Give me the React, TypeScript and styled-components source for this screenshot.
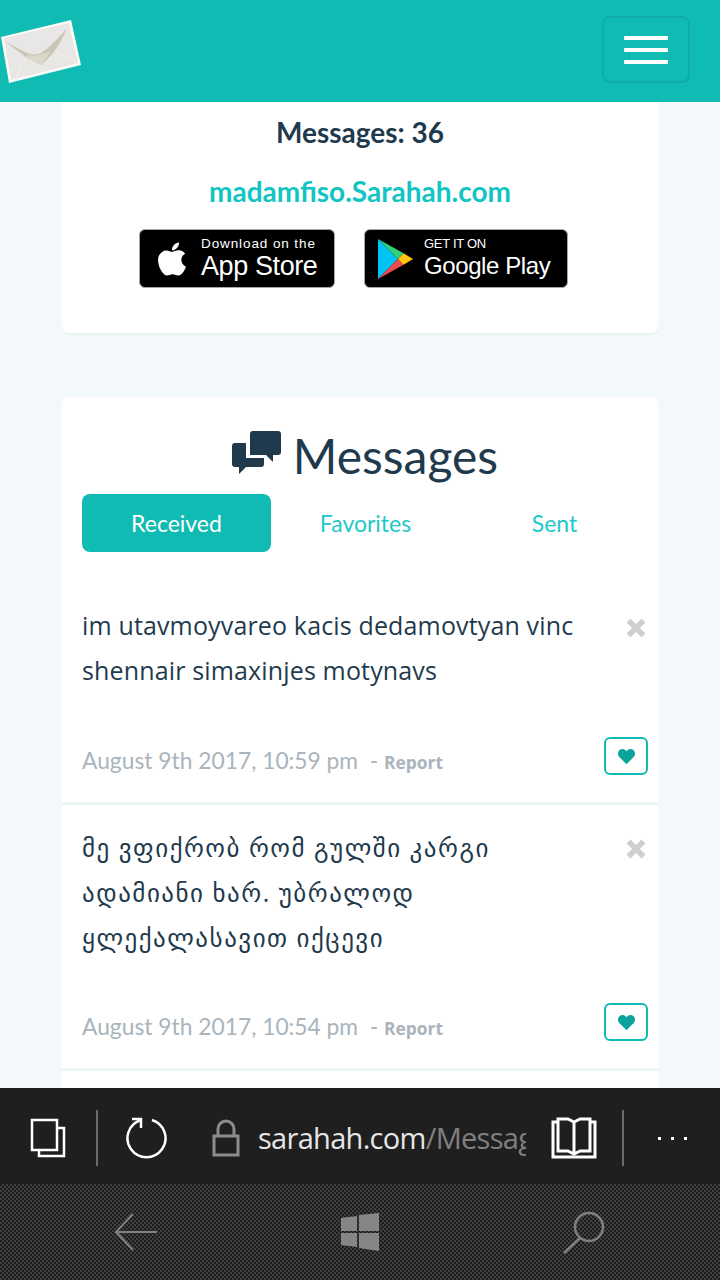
import React from "react";
import styled, { createGlobalStyle } from "styled-components";
import { FaApple, FaHeart } from "react-icons/fa";

const GlobalStyle = createGlobalStyle`
  html, body {
    margin: 0;
    padding: 0;
    background: #f3f8fb;
  }
  * {
    box-sizing: border-box;
  }
`;

const SANS = `"Open Sans", "DejaVu Sans", sans-serif`;
const TITLE = `Lato, "Open Sans", sans-serif`;

const S = {
  Screen: styled.div`
    width: 720px;
    height: 1280px;
    display: flex;
    flex-direction: column;
    overflow: hidden;
    font-family: ${SANS};
    color: #1f3a4d;
  `,
  Header: styled.header`
    height: 102px;
    flex: none;
    background: #10bbb3;
    display: flex;
    align-items: center;
    justify-content: space-between;
    padding: 0 30px 0 0;
  `,
  Logo: styled.svg`
    flex: none;
    margin: 3px 0 0 -1px;
    filter: blur(0.5px);
  `,
  Burger: styled.div`
    width: 88px;
    height: 67px;
    margin-top: -3px;
    border: 2px solid #0fada5;
    border-radius: 8px;
    display: flex;
    flex-direction: column;
    align-items: center;
    justify-content: center;
    gap: 8px;
    span {
      width: 44px;
      height: 4px;
      border-radius: 1px;
      background: #fff;
    }
  `,
  Page: styled.main`
    flex: 1;
    min-height: 0;
    overflow: hidden;
    padding: 0 62px;
    display: flex;
    flex-direction: column;
    gap: 64px;
  `,
  Card: styled.section`
    flex: none;
    background: #fff;
    border-radius: 0 0 6px 6px;
    box-shadow: 0 2px 0 #e6f3f4;
  `,
  TopCard: styled.div`
    height: 231px;
    padding-top: 12px;
    display: flex;
    flex-direction: column;
    align-items: center;
  `,
  Count: styled.div`
    font-family: ${TITLE};
    font-size: 28px;
    line-height: 36px;
    font-weight: 700;
  `,
  Link: styled.div`
    margin-top: 23px;
    font-family: ${TITLE};
    font-size: 28px;
    line-height: 36px;
    font-weight: 700;
    color: #12c4c4;
  `,
  Badges: styled.div`
    margin: 20px 13px 0 0;
    display: flex;
    align-items: center;
    gap: 29px;
  `,
  Badge: styled.div<{ $w: number }>`
    width: ${(p) => p.$w}px;
    height: 59px;
    background: #000;
    border: 1px solid #a6a6a6;
    border-radius: 6px;
    color: #fff;
    display: flex;
    align-items: center;
    gap: 10px;
    padding-left: 13px;
  `,
  BadgeText: styled.div`
    display: flex;
    flex-direction: column;
    font-family: "Liberation Sans", Arial, sans-serif;
    white-space: nowrap;
  `,
  BadgeSmall: styled.span<{ $size: number; $spacing: number }>`
    font-size: ${(p) => p.$size}px;
    line-height: 15px;
    letter-spacing: ${(p) => p.$spacing}px;
  `,
  BadgeBig: styled.span<{ $size: number }>`
    font-size: ${(p) => p.$size}px;
    line-height: 30px;
    letter-spacing: -0.4px;
  `,
  Panel: styled.section`
    flex: 1;
    background: #fff;
    border-radius: 6px 6px 0 0;
    padding: 26px 0 0;
  `,
  Title: styled.h2`
    margin: 0;
    height: 71px;
    padding-left: 10px;
    display: flex;
    align-items: flex-start;
    justify-content: center;
    gap: 11px;
    font-family: ${TITLE};
    font-size: 48px;
    line-height: 66px;
    font-weight: 400;
    svg {
      margin-top: 8px;
    }
  `,
  Tabs: styled.nav`
    display: grid;
    grid-template-columns: repeat(3, 189px);
    padding: 0 20px;
  `,
  Tab: styled.div<{ $active?: boolean }>`
    height: 58px;
    border-radius: 8px;
    display: flex;
    align-items: center;
    justify-content: center;
    font-family: ${TITLE};
    font-size: 23px;
    background: ${(p) => (p.$active ? "#10bbb3" : "transparent")};
    color: ${(p) => (p.$active ? "#fff" : "#1ec8c8")};
  `,
  Message: styled.article<{ $top: number }>`
    padding: ${(p) => p.$top}px 12px 27px 20px;
    border-bottom: 3px solid #ecf6f7;
  `,
  Row: styled.div`
    display: flex;
    justify-content: space-between;
    align-items: flex-start;
  `,
  Body: styled.p<{ $lh: number; $spacing: number }>`
    margin: 0;
    width: 510px;
    font-size: 25px;
    line-height: ${(p) => p.$lh}px;
    letter-spacing: ${(p) => p.$spacing}px;
    color: #1f3a4d;
  `,
  Close: styled.div<{ $top: number }>`
    width: 20px;
    height: 20px;
    margin-top: ${(p) => p.$top}px;
    display: flex;
  `,
  Meta: styled.div<{ $gap: number }>`
    display: flex;
    align-items: center;
    justify-content: space-between;
    margin: ${(p) => p.$gap}px -2px 0 0;
    height: 38px;
  `,
  Date: styled.div`
    padding-top: 8px;
    font-family: ${TITLE};
    font-size: 22.8px;
    color: #a9b4bc;
    white-space: pre;
    display: flex;
    align-items: baseline;
  `,
  Report: styled.span`
    font-family: ${SANS};
    font-weight: 700;
    font-size: 17.4px;
  `,
  Like: styled.button`
    width: 44px;
    height: 38px;
    padding: 0;
    background: #fff;
    border: 2px solid #10bbb3;
    border-radius: 6px;
    color: #0ca39d;
    font-size: 17px;
    display: flex;
    align-items: center;
    justify-content: center;
  `,
  BrowserBar: styled.div`
    height: 96px;
    flex: none;
    padding-top: 4px;
    background: #1f1f1f;
    display: flex;
    align-items: center;
    color: #fff;
  `,
  Tool: styled.div<{ $w: number }>`
    flex: none;
    width: ${(p) => p.$w}px;
    display: flex;
    align-items: center;
    justify-content: center;
  `,
  Divider: styled.div`
    flex: none;
    width: 2px;
    height: 56px;
    background: #6b6b6b;
  `,
  Address: styled.div`
    flex: none;
    width: 268px;
    overflow: hidden;
    white-space: nowrap;
    font-family: ${SANS};
    font-size: 29px;
    letter-spacing: -0.7px;
    line-height: 40px;
    color: #e6e6e6;
    span {
      color: #808080;
    }
  `,
  Dots: styled.div`
    flex: none;
    width: 96px;
    display: flex;
    justify-content: center;
    gap: 10px;
    i {
      width: 3px;
      height: 3px;
      background: #fff;
    }
  `,
  SystemBar: styled.div`
    height: 96px;
    flex: none;
    display: grid;
    grid-template-columns: 272px 176px 272px;
    align-items: center;
    background: repeating-conic-gradient(#404040 0 25%, #1c1c1c 0 50%) 0 0 / 4px 4px;
    color: #808080;
  `,
  SystemKey: styled.div`
    display: flex;
    justify-content: center;
  `,
};

const Envelope = () => (
  <S.Logo width="90" height="75" viewBox="0 0 90 75">
    <polygon points="2,22 72,5 82,50 10,68" fill="#fbfaf4" />
    <polygon points="5,23 70,8 79,48 12,65" fill="#e8e7e6" />
    <path d="M15 65 L28 42 M78 47 L55 35" stroke="#f4f2e6" strokeWidth="1" fill="none" />
    <path d="M7 27 L28 38 Q36 41 42 38 Q52 32 68 13 Q62 28 54 38 L43 50 L28 43 Z" fill="#cbc6b4" />
    <path d="M28 40 Q36 42 44 39 L52 36 L43 50 L28 43 Z" fill="#dad6c8" />
  </S.Logo>
);

const PlayLogo = () => (
  <svg width="36" height="40" viewBox="0 0 38 42">
    <polygon points="0,0 0,42 21,21" fill="#00c3f5" />
    <polygon points="0,0 27,15 21,21" fill="#30d27a" />
    <polygon points="0,42 27,27 21,21" fill="#ef4a52" />
    <polygon points="27,15 37,21 27,27 21,21" fill="#ffc60d" />
  </svg>
);

const ChatIcon = () => (
  <svg width="50" height="44" viewBox="0 0 50 44" fill="#1f3a4d">
    <path d="M18 3 Q18 0 21 0 H46 Q49 0 49 3 V21 Q49 24 46 24 H41 V31 L34 24 H18 Z" />
    <path d="M14 12 V27 H32 V33 Q32 36 29 36 H14 L7 43 V36 H3 Q0 36 0 33 V15 Q0 12 3 12 Z" />
  </svg>
);

const CloseIcon = () => (
  <svg width="20" height="20" viewBox="0 0 20 20">
    <path d="M2.5 2.5 L17.5 17.5 M17.5 2.5 L2.5 17.5" stroke="#cfcfcf" strokeWidth="5.5" />
  </svg>
);

const messages = [
  {
    id: 1,
    text: "im utavmoyvareo kacis dedamovtyan vinc shennair simaxinjes motynavs",
    date: "August 9th 2017, 10:59 pm",
    top: 51,
    gap: 44,
    lh: 45,
    spacing: 0.15,
    closeTop: 15,
  },
  {
    id: 2,
    text: "მე ვფიქრობ რომ გულში კარგი ადამიანი ხარ. უბრალოდ ყლექალასავით იქცევი",
    date: "August 9th 2017, 10:54 pm",
    top: 20,
    gap: 43,
    lh: 45,
    spacing: 1.5,
    closeTop: 14,
  },
];

const App = () => (
  <>
    <GlobalStyle />
    <S.Screen>
      <S.Header>
        <Envelope />
        <S.Burger>
          <span />
          <span />
          <span />
        </S.Burger>
      </S.Header>

      <S.Page>
        <S.Card>
          <S.TopCard>
            <S.Count>Messages: 36</S.Count>
            <S.Link>madamfiso.Sarahah.com</S.Link>
            <S.Badges>
              <S.Badge $w={196}>
                <FaApple size={38} />
                <S.BadgeText>
                  <S.BadgeSmall $size={13.5} $spacing={0.9}>
                    Download on the
                  </S.BadgeSmall>
                  <S.BadgeBig $size={27}>App Store</S.BadgeBig>
                </S.BadgeText>
              </S.Badge>
              <S.Badge $w={204}>
                <PlayLogo />
                <S.BadgeText>
                  <S.BadgeSmall $size={13} $spacing={-0.3}>
                    GET IT ON
                  </S.BadgeSmall>
                  <S.BadgeBig $size={24}>Google Play</S.BadgeBig>
                </S.BadgeText>
              </S.Badge>
            </S.Badges>
          </S.TopCard>
        </S.Card>

        <S.Panel>
          <S.Title>
            <ChatIcon />
            Messages
          </S.Title>
          <S.Tabs>
            <S.Tab $active>Received</S.Tab>
            <S.Tab>Favorites</S.Tab>
            <S.Tab>Sent</S.Tab>
          </S.Tabs>
          {messages.map((m) => (
            <S.Message key={m.id} $top={m.top}>
              <S.Row>
                <S.Body $lh={m.lh} $spacing={m.spacing}>
                  {m.text}
                </S.Body>
                <S.Close $top={m.closeTop}>
                  <CloseIcon />
                </S.Close>
              </S.Row>
              <S.Meta $gap={m.gap}>
                <S.Date>
                  {m.date}
                  {"  - "}
                  <S.Report>Report</S.Report>
                </S.Date>
                <S.Like aria-label="favorite">
                  <FaHeart />
                </S.Like>
              </S.Meta>
            </S.Message>
          ))}
        </S.Panel>
      </S.Page>

      <S.BrowserBar>
        <S.Tool $w={96}>
          <svg width="36" height="40" viewBox="0 0 36 40" fill="none" stroke="#fff" strokeWidth="2.5">
            <rect x="2" y="2" width="25" height="30" />
            <path d="M27 10 H34 V38 H9 V32" />
          </svg>
        </S.Tool>
        <S.Divider />
        <S.Tool $w={96}>
          <svg width="42" height="42" viewBox="0 0 42 42" fill="none" stroke="#fff" strokeWidth="2.5">
            <path d="M27 3 A19 19 0 1 1 16 3" />
            <path d="M7 2 H16 V11" />
          </svg>
        </S.Tool>
        <S.Tool $w={64}>
          <svg width="28" height="38" viewBox="0 0 28 38" fill="none" stroke="#8c8c8c" strokeWidth="3">
            <rect x="2" y="17" width="24" height="19" />
            <path d="M6 17 V10 A8 8 0 0 1 22 10 V17" />
          </svg>
        </S.Tool>
        <S.Address>
          sarahah.com<span>/Messages</span>
        </S.Address>
        <S.Tool $w={96}>
          <svg width="46" height="42" viewBox="0 0 46 42" fill="none" stroke="#fff" strokeWidth="3">
            <path d="M7 2 H17 L23 5 L29 2 H39 V34 H29 L23 37 L17 34 H7 Z M23 5 V37" />
            <path d="M7 5 H2 V40 H44 V5 H39" />
          </svg>
        </S.Tool>
        <S.Divider />
        <S.Dots>
          <i />
          <i />
          <i />
        </S.Dots>
      </S.BrowserBar>

      <S.SystemBar>
        <S.SystemKey>
          <svg width="44" height="38" viewBox="0 0 44 38" fill="none" stroke="#808080" strokeWidth="2">
            <path d="M43 19 H2 M19 1 L2 19 L19 37" />
          </svg>
        </S.SystemKey>
        <S.SystemKey>
          <svg width="40" height="38" viewBox="0 0 40 38" fill="#868686">
            <path d="M1 5 L17 3 V18 H1 Z M19 2 L39 0 V18 H19 Z M1 20 H17 V34 L1 32 Z M19 20 H39 V38 L19 35 Z" />
          </svg>
        </S.SystemKey>
        <S.SystemKey>
          <svg width="44" height="44" viewBox="0 0 44 44" fill="none" stroke="#808080" strokeWidth="2.5">
            <circle cx="27" cy="17" r="14" />
            <path d="M18 28 L2 43" />
          </svg>
        </S.SystemKey>
      </S.SystemBar>
    </S.Screen>
  </>
);

export default App;
